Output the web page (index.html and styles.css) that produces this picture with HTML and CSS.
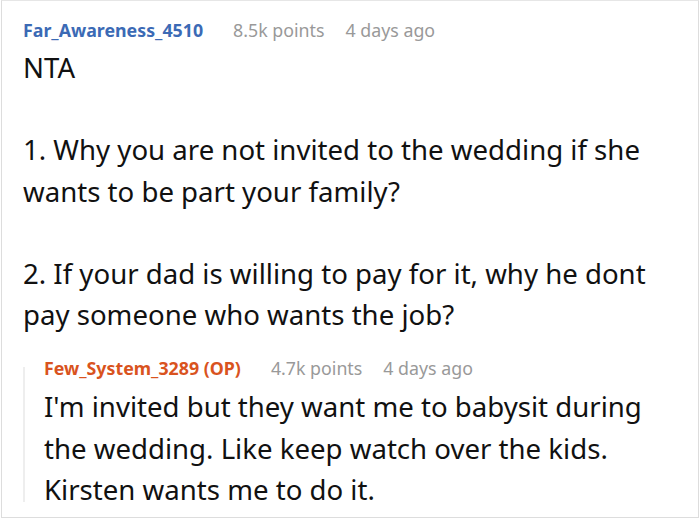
FILE: index.html
```html
<!DOCTYPE html>
<html>
<head>
<meta charset="utf-8">
<link rel="stylesheet" href="styles.css">
</head>
<body>
<div class="card">
  <div class="comment">
    <div class="meta">
      <span class="user">Far_Awareness_4510</span>
      <span class="info">8.5k points</span>
      <span class="info">4 days ago</span>
    </div>
    <div class="body">
      <p>NTA</p>
      <p>1. Why you are not invited to the wedding if she wants to be part your family?</p>
      <p>2. If your dad is willing to pay for it, why he dont pay someone who wants the job?</p>
    </div>
    <div class="reply">
      <div class="meta">
        <span class="user op">Few_System_3289 (OP)</span>
        <span class="info">4.7k points</span>
        <span class="info">4 days ago</span>
      </div>
      <div class="body">
        <p>I'm invited but they want me to babysit during the wedding. Like keep watch over the kids. Kirsten wants me to do it.</p>
      </div>
    </div>
  </div>
</div>
</body>
</html>
```
FILE: styles.css
```css
html, body {
  margin: 0;
  padding: 0;
  background: #fff;
}
.card {
  width: 698px;
  height: 518px;
  border: 1px solid #ddd;
  border-top-color: #e6e6e6;
  box-sizing: border-box;
  margin-left: 1px;
  overflow: hidden;
  font-family: "Noto Sans", "Open Sans", sans-serif;
}
.comment {
  padding: 17px 0 0 21px;
}
.meta {
  display: flex;
  gap: 21px;
  font-size: 17.8px;
  line-height: 24px;
}
.user {
  font-weight: bold;
  color: #3b6ab5;
  margin-right: 9px;
}
.user.op {
  color: #d9531e;
}
.info {
  color: #999;
}
.body {
  font-size: 27.6px;
  line-height: 41.2px;
  color: #111;
  width: 640px;
  margin-top: 5px;
}
.body p {
  margin: 0 0 41.2px 0;
}
.body p:last-child {
  margin-bottom: 0;
}
.reply {
  position: relative;
  margin-top: 21px;
  padding-left: 21px;
}
.reply::before {
  content: "";
  position: absolute;
  left: 0;
  top: 11px;
  bottom: 8px;
  border-left: 2px solid #eee;
}
.reply .body {
  width: 620px;
  margin-top: 6px;
}
```
